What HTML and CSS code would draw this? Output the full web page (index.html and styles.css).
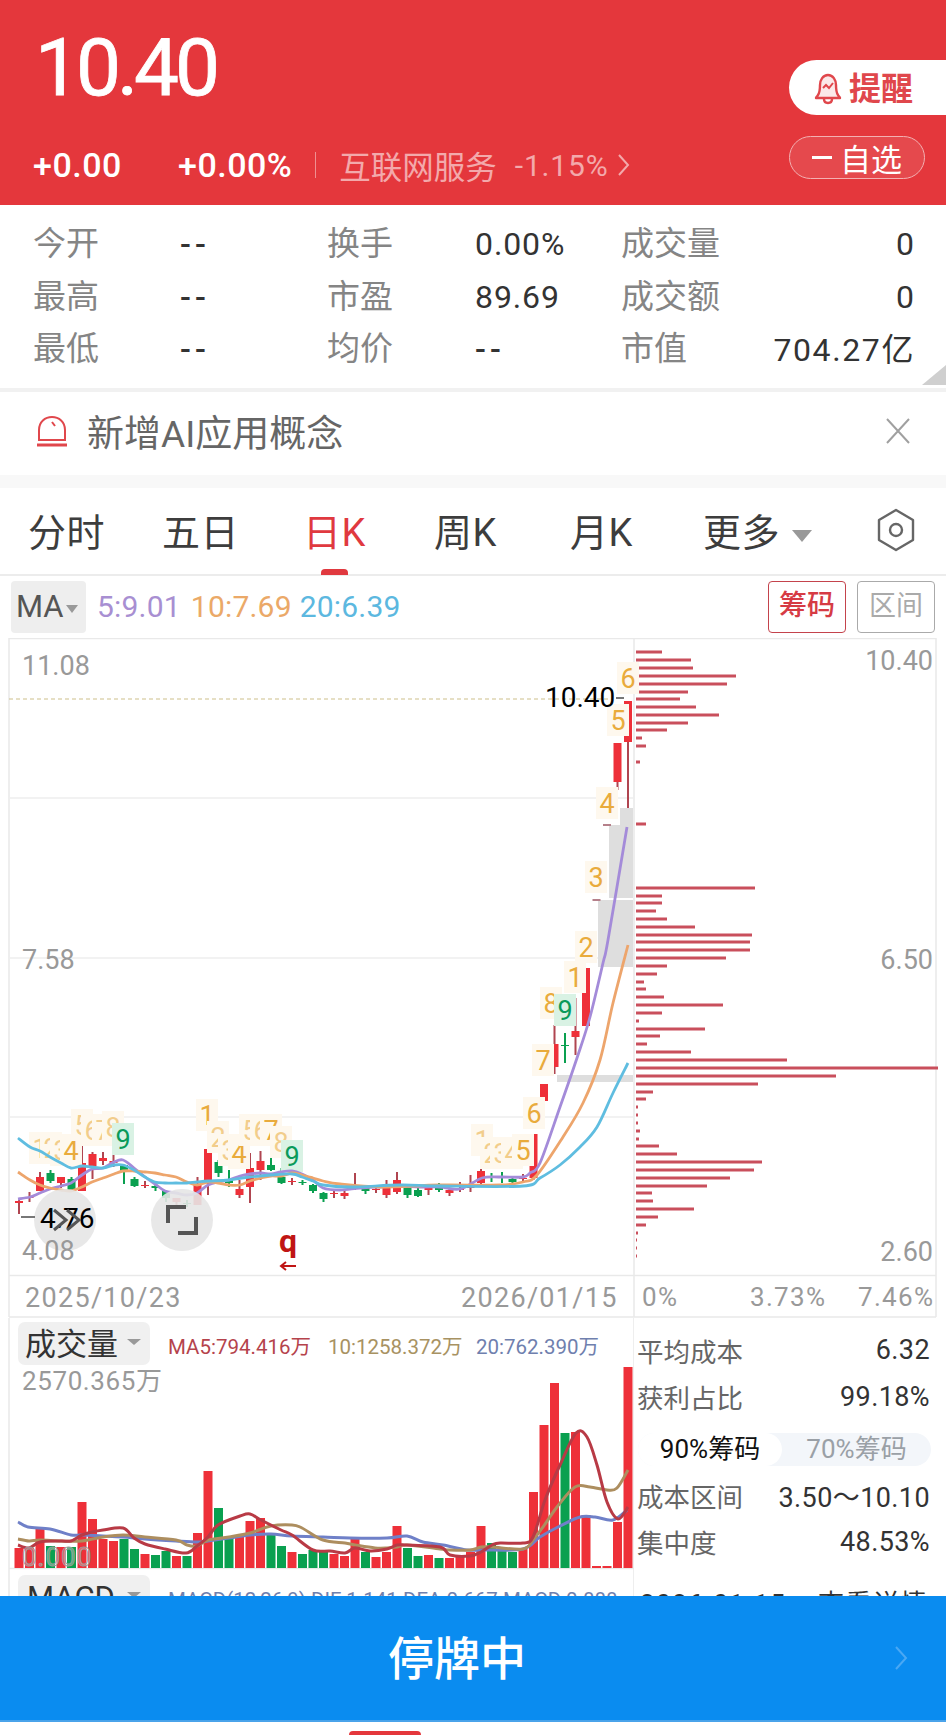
FILE: index.html
```html
<!DOCTYPE html>
<html lang="zh-CN">
<head>
    <meta charset="UTF-8">
    <title>行情</title>
    <link rel="stylesheet" href="styles.css">
</head>
<body>

    <header class="quote">
        <div class="quote-main">
            <div class="price">10.40</div>
            <div class="change-row">
                <span class="change change-abs">+0.00</span>
                <span class="change change-pct">+0.00%</span>
                <span class="sep"></span>
                <span class="sector">互联网服务</span>
                <span class="sector-pct">-1.15%</span>
                <svg class="sector-arrow" width="14" height="24" viewBox="0 0 14 24"><path d="M2 2l9 10-9 10" fill="none" stroke="#f3a9ab" stroke-width="2"/></svg>
            </div>
        </div>
        <div class="quote-btns">
            <div class="remind-btn">
                <svg width="30" height="34" viewBox="0 0 30 34"><path d="M5 24c2-3 2-6 2-10 0-5 3-10 8-10s8 5 8 10c0 4 0 7 2 10 1 2 2 2 2 3H3c0-1 1-1 2-3z" fill="#fbe9e9" stroke="#e0474c" stroke-width="2.4" stroke-linejoin="round"/><path d="M11 28c0 3 2 4 4 4s4-1 4-4" fill="none" stroke="#e0474c" stroke-width="2.4"/><path d="M10 17l3-3 3 3 4-5" fill="none" stroke="#e0474c" stroke-width="2"/></svg>
                <span>提醒</span>
            </div>
            <div class="watch-btn"><i></i><span>自选</span></div>
        </div>
    </header>

    <section class="stats">
        <span class="lbl">今开</span><span class="val none">--</span>
        <span class="lbl">换手</span><span class="val">0.00%</span>
        <span class="lbl">成交量</span><span class="val right">0</span>
        <span class="lbl">最高</span><span class="val none">--</span>
        <span class="lbl">市盈</span><span class="val">89.69</span>
        <span class="lbl">成交额</span><span class="val right">0</span>
        <span class="lbl">最低</span><span class="val none">--</span>
        <span class="lbl">均价</span><span class="val none">--</span>
        <span class="lbl">市值</span><span class="val right wide">704.27亿</span>
        <i class="corner"></i>
    </section>

    <section class="notice">
        <svg width="32" height="32" viewBox="0 0 32 32"><path d="M3 25V15C3 7 9 2 16 2s13 5 13 13v10z" fill="#fff" stroke="#e0474c" stroke-width="2"/><path d="M16 7l3 4" stroke="#e0474c" stroke-width="2"/><path d="M1 30h30" stroke="#e0474c" stroke-width="3"/></svg>
        <span class="notice-text">新增AI应用概念</span>
        <svg class="notice-close" width="24" height="26" viewBox="0 0 24 26"><path d="M1 1l22 24M23 1L1 25" stroke="#a0a0a0" stroke-width="2" fill="none"/></svg>
    </section>
    <div class="gap"></div>

    <nav class="tabs">
        <span class="tab t1">分时</span>
        <span class="tab t2">五日</span>
        <span class="tab t3 on">日K</span>
        <span class="tab t4">周K</span>
        <span class="tab t5">月K</span>
        <span class="tab t6">更多<b class="caret big"></b></span>
        <svg class="hex" width="40" height="44" viewBox="0 0 40 44"><path d="M20 2l17 10v20L20 42 3 32V12z" fill="none" stroke="#666" stroke-width="2.400" stroke-linejoin="round"/><circle cx="20" cy="22" r="6" fill="none" stroke="#666" stroke-width="2.400"/></svg>
    </nav>

    <div class="ma-bar">
        <span class="ma-chip">MA<b class="caret"></b></span>
        <span class="ma5">5:9.01</span>
        <span class="ma10">10:7.69</span>
        <span class="ma20">20:6.39</span>
        <span class="mode-btn on">筹码</span>
        <span class="mode-btn">区间</span>
    </div>

    <svg id="kline" class="kline" width="946" height="680" viewBox="0 638 946 680">
        <path class="frame" d="M9 638V1317M634 638V1317M936 638V1317M9 638.500H936M9 1275.500H936M9 1317H936"/>
        <path class="grid" d="M9 798H634M9 958H634M9 1117H634"/>
        <path class="last-line" d="M9 699H612"/>
        <g id="gaps" class="gapbox">
            <rect x="620" y="808" width="13" height="17"/>
            <rect x="609" y="825" width="24" height="73"/>
            <rect x="598" y="900" width="35" height="67"/>
            <rect x="557" y="1075" width="76" height="7"/>
        </g>
        <g id="candles"></g>
        <g id="chips"></g>
        <g id="nines"></g>
        <path id="ma5line" class="mline m-purple"/>
        <path id="ma10line" class="mline m-orange"/>
        <path id="ma20line" class="mline m-blue"/>
        <circle class="round-btn" cx="65" cy="1220" r="31"/>
        <circle class="round-btn" cx="182" cy="1220" r="31"/>

        <text class="axis" x="22" y="675">11.08</text>
        <text class="axis" x="22" y="969">7.58</text>
        <text class="axis" x="22" y="1260">4.08</text>
        <text class="axis end" x="933" y="670">10.40</text>
        <text class="axis end" x="933" y="969">6.50</text>
        <text class="axis end" x="933" y="1261">2.60</text>
        <text class="marker" x="545" y="707">10.40</text>
        <path class="dash" d="M616 698h8"/>

        <path class="dash" d="M21 1217h14"/>
        <text class="marker" x="40" y="1228">4.76</text>
        <path class="btn-icon thin" d="M54 1210l12 10-12 10M67 1210l12 10-12 10"/>
        <path class="btn-icon" d="M168 1223v-16h18M196 1217v16h-18"/>
        <text class="qmark" x="279" y="1252">q</text>
        <path class="qarrow" d="M296 1266h-15m5-4l-5 4 5 4"/>

        <text class="date" x="25" y="1307">2025/10/23</text>
        <text class="date" x="461" y="1307">2026/01/15</text>
        <text class="date pct" x="642" y="1306">0%</text>
        <text class="date pct" x="750" y="1306">3.73%</text>
        <text class="date pct" x="858" y="1306">7.46%</text>
    </svg>

    <section class="lower">
        <svg id="volume" class="vol" width="634" height="278" viewBox="0 1318 634 278">
            <path class="frame" d="M9 1318V1596M634 1318V1596M9 1568.500H634"/>
            <g id="volbars"></g>
            <path id="vol20" class="vline v-blue"/>
            <path id="vol10" class="vline v-tan"/>
            <path id="vol5" class="vline v-red"/>
            <rect class="chip-bg" x="18" y="1322" width="132" height="43" rx="7"/>
            <text class="chip-text" x="25" y="1355">成交量</text>
            <path class="chip-caret" d="M127 1339h14l-7 6z"/>
            <text class="leg leg-r" x="168" y="1354">MA5:794.416万</text>
            <text class="leg leg-t" x="328" y="1354">10:1258.372万</text>
            <text class="leg leg-b" x="476" y="1354">20:762.390万</text>
            <text class="vol-max" x="22" y="1390">2570.365万</text>
            <text class="vol-zero" x="22" y="1566">0.000</text>
            <rect class="chip-bg" x="18" y="1575" width="132" height="43" rx="7"/>
            <text class="chip-text" x="27" y="1608">MACD</text>
            <path class="chip-caret" d="M127 1592h14l-7 6z"/>
            <text class="leg macd" x="168" y="1607">MACD(12,26,9) DIF:1.141 DEA:0.667 MACD:0.888</text>
        </svg>

        <aside class="cost">
            <div class="cost-row"><span>平均成本</span><b>6.32</b></div>
            <div class="cost-row"><span>获利占比</span><b>99.18%</b></div>
            <div class="pill"><span class="pill-on">90%筹码</span><span class="pill-off">70%筹码</span></div>
            <div class="cost-row"><span>成本区间</span><b>3.50～10.10</b></div>
            <div class="cost-row"><span>集中度</span><b>48.53%</b></div>
            <div class="cost-date"><span>2026-01-15</span><span>查看详情</span></div>
        </aside>
    </section>

    <div class="halt">
        <span>停牌中</span>
        <svg class="halt-arrow" width="14" height="24" viewBox="0 0 14 24"><path d="M2 1l10 11L2 23" fill="none" stroke="#4aa8f4" stroke-width="2"/></svg>
    </div>
    <div class="foot"><i></i></div>

    <script src="chart.js"></script>
</body>
</html>
```

FILE: styles.css
```css
* {
    box-sizing: border-box;
}

body {
    font-family: Roboto, 'Noto Sans CJK SC', sans-serif;
    background-color: #fff;
    color: #333;
    width: 946px;
    height: 1735px;
    margin: 0;
    overflow: hidden;
}

/* top quote block */
.quote {
    height: 205px;
    background-color: #e4373c;
    color: #fff;
    display: flex;
    justify-content: space-between;
}

.quote-main {
    padding-left: 33px;
}

.price {
    font-size: 80px;
    font-weight: 400;
    -webkit-text-stroke: 0.8px #fff;
    line-height: 80px;
    letter-spacing: -4px;
    margin-top: 28px;
    margin-left: 2px;
}

.change-row {
    display: flex;
    align-items: center;
    height: 34px;
    margin-top: 40px;
    font-size: 34px;
}

.change {
    font-weight: 500;
    letter-spacing: 0.500px;
}

.change-abs {
    width: 145px;
}

.sep {
    width: 1px;
    height: 26px;
    background-color: #ef8f91;
    margin: 0 23px;
}

.sector {
    font-size: 31.500px;
    color: #f3a9ab;
}

.sector-pct {
    color: #f3a9ab;
    font-size: 30px;
    margin-left: 18px;
    margin-right: 9px;
    letter-spacing: 0.800px;
}

.quote-btns {
    width: 157px;
    padding-top: 60px;
    display: flex;
    flex-direction: column;
    gap: 21px;
}

.remind-btn {
    height: 55px;
    background-color: #fff;
    border-radius: 28px 0 0 28px;
    display: flex;
    align-items: center;
    gap: 6px;
    padding-left: 24px;
    color: #e0474c;
    font-size: 32px;
    font-weight: 700;
}

.remind-btn span {
    margin-bottom: 4px;
}

.watch-btn {
    width: 136px;
    height: 43px;
    border: 1.500px solid #f3b0b2;
    border-radius: 22px;
    background-color: #e5494d;
    display: flex;
    align-items: center;
    padding-left: 22px;
    font-size: 31px;
    gap: 8px;
}

.watch-btn i {
    width: 20px;
    height: 3px;
    background-color: #fff;
}

/* stats table */
.stats {
    height: 183px;
    padding-top: 10px;
    padding-left: 33px;
    padding-right: 31px;
    display: grid;
    grid-template-columns: 147px 147px 148px 146px 140px 154px;
    grid-auto-rows: 52.500px;
    align-items: center;
    position: relative;
}

.lbl {
    font-size: 33px;
    color: #858585;
}

.val {
    font-size: 32px;
    color: #333;
    white-space: nowrap;
    letter-spacing: 0.900px;
    margin-top: 6px;
}

.val.none {
    letter-spacing: 4px;
    font-weight: 500;
}

.val.right {
    text-align: right;
}

.val.wide {
    letter-spacing: 1.600px;
    margin-top: 1px;
}

.corner {
    position: absolute;
    right: 0;
    bottom: 3px;
    border-left: 24px solid transparent;
    border-bottom: 20px solid #cfcfcf;
}

.notice {
    height: 87px;
    border-top: 4px solid #f1f1f1;
    padding: 0 36px 5px 36px;
    display: flex;
    align-items: center;
    gap: 19px;
}

.notice-text {
    font-size: 37px;
    color: #666;
    flex: 1;
}

.gap {
    height: 13px;
    background-color: #f8f8f8;
}

/* period tabs */
.tabs {
    height: 88px;
    border-bottom: 2px solid #ececec;
    position: relative;
    display: grid;
    grid-template-columns: 134px 141px 131px 136px 133px 173px 1fr;
    padding: 0 0 3px 28px;
    align-items: center;
    font-size: 38px;
    color: #3d3d3d;
}

.tab {
    white-space: nowrap;
    letter-spacing: 0.400px;
}

.tab.on {
    color: #e0393f;
}

.tab.on::after {
    content: '';
    position: absolute;
    left: 321px;
    bottom: -1px;
    width: 27px;
    height: 6px;
    border-radius: 4px 4px 0 0;
    background-color: #e0393f;
}

.caret {
    display: inline-block;
    width: 0;
    height: 0;
    border-left: 7px solid transparent;
    border-right: 7px solid transparent;
    border-top: 9px solid #999;
    margin-left: 3px;
    vertical-align: middle;
}

.caret.big {
    border-left-width: 10px;
    border-right-width: 10px;
    border-top-width: 12px;
    margin-left: 12px;
}

/* indicator bar */
.ma-bar {
    height: 62px;
    padding: 5px 11px 0 11px;
    display: flex;
    align-items: flex-start;
    font-size: 30px;
    border-bottom: 0;
}

.ma-chip {
    width: 75px;
    height: 52px;
    background-color: #eee;
    border-radius: 4px;
    color: #555;
    padding-left: 5px;
    font-size: 31px;
    line-height: 52px;
    margin-right: 11px;
    white-space: nowrap;
}

.ma-chip .caret {
    margin-left: 2px;
    border-left-width: 6px;
    border-right-width: 6px;
    border-top-width: 8px;
}

.ma5, .ma10, .ma20 {
    line-height: 52px;
    margin-right: 10px;
    letter-spacing: 0.200px;
}

.ma5 { color: #a88fd2; }
.ma10 { color: #eba968; margin-right: 8px; }
.ma20 { color: #5cb8e0; margin-right: auto; }

.mode-btn {
    width: 78px;
    height: 52px;
    border: 1.500px solid #aaa;
    border-radius: 4px;
    color: #aaa;
    text-align: center;
    line-height: 48px;
    font-size: 27px;
    margin-left: 11px;
}

.mode-btn.on {
    border-color: #c4434c;
    color: #d63b44;
    font-size: 28px;
    font-weight: 500;
}

/* charts */
.kline, .vol {
    display: block;
}

.frame {
    fill: none;
    stroke: #e9e9e9;
    stroke-width: 1.500;
}

.grid {
    fill: none;
    stroke: #eeeeee;
    stroke-width: 1.500;
}

.last-line {
    fill: none;
    stroke: #cdbf8a;
    stroke-width: 1;
    stroke-dasharray: 4 3;
}

.gapbox rect {
    fill: #dedede;
}

.mline {
    fill: none;
    stroke-width: 2.800;
    stroke-linejoin: round;
}

.m-purple { stroke: #a48bd9; }
.m-orange { stroke: #eda56c; }
.m-blue { stroke: #5fbde0; }

.axis {
    font-size: 27px;
    fill: #999;
}

.axis.end {
    text-anchor: end;
}

.marker {
    font-size: 28px;
    fill: #000;
}

.dash {
    fill: none;
    stroke: #777;
    stroke-width: 2;
}

.round-btn {
    fill: #e6e6e6;
    opacity: 0.9;
}

.btn-icon {
    fill: none;
    stroke: #555;
    stroke-width: 4;
}

.btn-icon.thin {
    stroke-width: 3;
}

.qmark {
    font-size: 32px;
    font-weight: 700;
    fill: #c01515;
}

.qarrow {
    fill: none;
    stroke: #c01515;
    stroke-width: 2;
}

.date {
    font-size: 27px;
    fill: #999;
    letter-spacing: 1.300px;
}

.date.pct {
    font-size: 26px;
}

.nine-bg { fill: #fef8ee; }
.nine-bg.green { fill: #d9f2e4; }

.nine {
    font-size: 27px;
    text-anchor: middle;
    fill: #e9ab3c;
}

.nine.green {
    fill: #0a9a5a;
}

.chip-bg { fill: #f0f0f0; }

.chip-text {
    font-size: 31px;
    fill: #333;
}

.chip-caret { fill: #999; }

.leg {
    font-size: 20.500px;
}

.leg-r { fill: #b5434c; }
.leg-t { fill: #a89262; }
.leg-b { fill: #6f80ae; }

.macd { fill: #6f80ae; }

.vol-max {
    font-size: 26px;
    fill: #999;
    letter-spacing: 0.600px;
}

.vol-zero {
    font-size: 26px;
    fill: #fff;
    fill-opacity: 0.3;
    stroke: #9a9a9a;
    stroke-width: 1;
    letter-spacing: 1px;
}

.vline {
    fill: none;
    stroke-width: 3;
    stroke-linejoin: round;
}

.v-blue { stroke: #6f80c8; }
.v-tan { stroke: #ad8e5f; }
.v-red { stroke: #b83a45; }

/* cost panel */
.lower {
    display: flex;
    height: 278px;
    overflow: hidden;
}

.cost {
    width: 312px;
    padding: 9px 16px 0 3px;
}

.cost-row {
    display: flex;
    justify-content: space-between;
    align-items: center;
    height: 46.500px;
    font-size: 26.500px;
    color: #666;
    white-space: nowrap;
}

.cost-row b {
    font-weight: 400;
    font-size: 27px;
    color: #333;
    letter-spacing: 0.400px;
}

.pill {
    display: flex;
    height: 33px;
    margin: 13px -1px 6px 1px;
    background-color: #f3f6fa;
    border-radius: 17px;
    font-size: 26px;
    line-height: 33px;
    color: #9aa0a6;
    text-align: center;
    white-space: nowrap;
}

.pill-on {
    width: 144px;
    background-color: #fff;
    border-radius: 17px;
    color: #111;
}

.pill-off {
    flex: 1;
}

.cost-date {
    display: flex;
    justify-content: space-between;
    margin-top: 23px;
    font-size: 26px;
    line-height: 32px;
    color: #333;
    letter-spacing: 1.500px;
    padding: 0 2px 0 3px;
}

.halt {
    height: 126px;
    background-color: #0a8cf0;
    border-bottom: 2px solid #4aa3ea;
    color: #fff;
    font-size: 46px;
    font-weight: 500;
    display: flex;
    align-items: center;
    justify-content: center;
    padding: 0 32px 6px 0;
    position: relative;
}

.halt-arrow {
    position: absolute;
    right: 38px;
    top: 50px;
}

.foot {
    height: 13px;
    display: flex;
    justify-content: center;
    align-items: flex-end;
    padding-right: 177px;
}

.foot i {
    width: 72px;
    height: 4px;
    background-color: #e4373c;
    border-radius: 12px 12px 0 0;
}
```

FILE: chart.js
```js
var NS = 'http://www.w3.org/2000/svg';
var RED = '#ee3039', GREEN = '#0aa050';

function el(parent, name, attrs, text) {
    var n = document.createElementNS(NS, name);
    for (var k in attrs) n.setAttribute(k, attrs[k]);
    if (text) n.textContent = text;
    document.getElementById(parent).appendChild(n);
}

function xOf(i) {
    return 19 + 10.5 * i;
}

// "x,y x,y ..." to a smoothed path
function smooth(str) {
    var p = str.split(' ').map(function (s) { return s.split(',').map(Number); });
    var d = 'M' + p[0][0] + ' ' + p[0][1];
    for (var i = 0; i < p.length - 1; i++) {
        var a = p[Math.max(i - 1, 0)], b = p[i], c = p[i + 1], e = p[Math.min(i + 2, p.length - 1)];
        d += 'C' + (b[0] + (c[0] - a[0]) / 6).toFixed(1) + ' ' + (b[1] + (c[1] - a[1]) / 6).toFixed(1) + ' ' +
            (c[0] - (e[0] - b[0]) / 6).toFixed(1) + ' ' + (c[1] - (e[1] - b[1]) / 6).toFixed(1) + ' ' + c[0] + ' ' + c[1];
    }
    return d;
}

// body top, body bottom, wick top, wick bottom, colour
var candles = [
    [1201,1203,1200,1214,'r'],[1197,1198,1192,1202,'r'],[1177,1191,1172,1191,'r'],[1173,1181,1170,1183,'g'],
    [1177,1183,1177,1188,'r'],[1179,1190,1177,1190,'g'],[1163,1191,1144,1191,'r'],[1154,1166,1152,1179,'r'],
    [1158,1161,1152,1165,'r'],[1161,1163,1149,1167,'r'],[1165,1171,1165,1184,'g'],[1179,1186,1177,1187,'g'],
    [1185,1186,1181,1188,'r'],[1186,1188,1183,1191,'g'],[1191,1198,1191,1202,'g'],[1198,1202,1198,1206,'r'],
    [1203,1204,1200,1207,'g'],[1185,1205,1177,1205,'r'],[1149,1180,1137,1195,'r'],[1162,1173,1160,1177,'g'],
    [1180,1183,1170,1187,'g'],[1189,1195,1180,1198,'r'],[1168,1187,1153,1203,'r'],[1161,1170,1151,1180,'r'],
    [1165,1170,1153,1171,'g'],[1177,1183,1168,1184,'g'],[1181,1182,1178,1185,'r'],[1182,1183,1180,1185,'g'],
    [1185,1191,1184,1193,'g'],[1193,1199,1192,1202,'g'],[1193,1194,1190,1198,'r'],[1193,1196,1190,1199,'r'],
    [1187,1188,1173,1190,'r'],[1188,1191,1186,1194,'g'],[1189,1190,1185,1193,'r'],[1187,1195,1180,1198,'r'],
    [1180,1192,1172,1194,'r'],[1188,1195,1186,1198,'g'],[1190,1196,1187,1197,'g'],[1188,1190,1186,1195,'r'],
    [1188,1190,1183,1192,'g'],[1190,1193,1188,1196,'r'],[1189,1190,1182,1192,'r'],[1186,1188,1175,1192,'r'],
    [1171,1183,1162,1187,'r'],[1176,1177,1173,1182,'g'],[1177,1178,1172,1183,'g'],[1179,1182,1177,1183,'g'],
    [1178,1179,1174,1183,'r'],[1134,1178,1134,1180,'r'],[1084,1101,1084,1118,'r'],[1044,1067,1025,1074,'r'],
    [1045,1046,1033,1063,'g'],[1031,1037,998,1055,'r'],[968,1026,968,1026,'r'],[899,901,899,901,'d'],
    [824,826,824,826,'d'],[743,782,743,790,'r'],[701,742,701,808,'r']
];

candles.forEach(function (c, i) {
    var x = xOf(i);
    var body = c[4] == 'r' ? RED : c[4] == 'g' ? GREEN : '#b5808a';
    var wick = c[4] == 'g' ? GREEN : '#b04550';
    el('candles', 'rect', { x: x - 1, y: c[2], width: 2, height: c[3] - c[2], fill: wick });
    el('candles', 'rect', { x: x - 4, y: c[0], width: 8, height: c[1] - c[0], fill: body });
});

// chip distribution, [y, length]
var chips = [
    [652,26],[660,55],[668,57],[676,100],[684,91],[692,52],[699,44],[707,60],[715,83],[723,52],[730,31],[738,6],[746,10],
    [762,4],[824,10],[888,119],[896,26],[903,26],[911,20],[919,31],[927,59],[935,116],[942,114],[950,114],[958,90],
    [966,31],[974,21],[982,8],[989,10],[997,28],[1005,87],[1013,26],[1021,3],[1029,69],[1036,24],[1044,11],[1052,55],
    [1060,151],[1068,302],[1076,200],[1084,122],[1092,17],[1099,10],[1107,2],[1115,2],[1123,2],[1131,4],[1139,3],
    [1146,23],[1154,41],[1162,126],[1170,118],[1178,94],[1186,71],[1193,16],[1201,17],[1209,58],[1217,22],[1225,10],
    [1233,2],[1240,1],[1248,1],[1256,1]
];

chips.forEach(function (c) {
    el('chips', 'rect', { x: 636, y: c[0] - 1.5, width: c[1], height: 3, fill: '#c94f5c' });
});

// magic nine labels: x, y, digit, style (s solid, f faint, g green)
var nines = [
    [40,1148,'1','f'],[51,1148,'2','f'],[61,1150,'3','f'],[71,1150,'4','s'],[82,1125,'5','f'],[92,1130,'6','f'],
    [103,1130,'7','f'],[113,1127,'8','f'],[123,1139,'9','g'],
    [207,1115,'1','s'],[218,1137,'2','f'],[229,1150,'3','f'],[239,1153,'4','s'],[250,1130,'5','f'],[261,1130,'6','f'],
    [271,1130,'7','s'],[281,1142,'8','f'],[292,1156,'9','g'],
    [482,1140,'1','f'],[491,1153,'2','f'],[501,1153,'3','f'],[512,1153,'4','f'],[523,1150,'5','s'],[534,1113,'6','s'],
    [543,1060,'7','s'],[551,1003,'8','s'],[565,1010,'9','g'],[575,977,'1','s'],[586,947,'2','s'],
    [596,877,'3','s'],[607,803,'4','s'],[618,720,'5','s'],[628,678,'6','s']
];

nines.forEach(function (n) {
    var green = n[3] == 'g';
    el('nines', 'rect', { x: n[0] - 11, y: n[1] - 16, width: 22, height: 32, 'class': green ? 'nine-bg green' : 'nine-bg' });
    el('nines', 'text', {
        x: n[0], y: n[1] + 10,
        'class': green ? 'nine green' : 'nine',
        opacity: n[3] == 'f' ? 0.55 : 1
    }, n[2]);
});

var lines = {
    ma5line: '18,1199 30,1197 40,1193 50,1189 61,1186 71,1183 82,1175 92,1169 103,1168 114,1162 123,1160 134,1168 145,1177 155,1184 165,1191 176,1193 187,1195 197,1193 208,1185 218,1182 229,1180 240,1176 250,1174 261,1173 271,1174 281,1172 292,1171 302,1174 313,1180 323,1188 340,1190 360,1188 380,1187 400,1186 420,1187 440,1187 460,1189 482,1178 500,1177 523,1177 530,1173 540,1163 560,1107 577,1058 590,1017 603,963 608,940 627,827',
    ma10line: '18,1172 30,1180 40,1185 50,1188 61,1190 71,1191 82,1187 92,1182 103,1178 114,1174 123,1171 134,1171 145,1172 155,1173 165,1175 176,1177 187,1182 197,1185 208,1182 218,1183 229,1185 240,1185 250,1181 261,1178 271,1176 281,1176 292,1173 302,1175 313,1178 323,1181 340,1184 380,1187 440,1185 500,1185 523,1182 537,1175 563,1137 583,1103 600,1060 613,1003 628,945',
    ma20line: '18,1138 30,1147 40,1151 50,1157 61,1163 71,1168 82,1166 92,1167 103,1168 114,1165 123,1165 134,1170 145,1177 155,1182 165,1183 176,1183 187,1183 197,1182 208,1181 229,1180 250,1177 271,1175 292,1174 302,1177 313,1181 323,1185 350,1187 400,1185 440,1186 523,1186 540,1178 560,1165 580,1147 597,1127 613,1093 628,1063',
    vol20: '18,1522 28,1527 50,1529 71,1535 82,1535 103,1536 123,1537 145,1539 176,1541 197,1542 208,1541 229,1538 250,1535 271,1534 292,1536 323,1537 350,1538 387,1538 407,1536 423,1542 443,1545 467,1550 483,1550 523,1549 540,1537 560,1526 580,1517 595,1517 613,1520 627,1510',
    vol10: '18,1539 29,1541 40,1540 61,1541 82,1541 103,1537 123,1535 145,1537 176,1540 187,1545 197,1546 208,1540 229,1537 250,1533 271,1526 292,1525 302,1528 323,1540 345,1543 355,1545 375,1548 387,1548 397,1547 407,1545 440,1549 450,1550 470,1550 481,1547 492,1547 523,1549 533,1540 543,1527 557,1507 575,1487 590,1487 607,1490 617,1488 628,1470',
    vol5: '18,1545 29,1548 40,1542 61,1541 71,1541 82,1535 92,1532 103,1530 123,1528 134,1538 145,1544 165,1549 186,1553 197,1546 208,1537 218,1525 240,1516 250,1514 261,1520 281,1530 292,1535 313,1550 330,1551 345,1553 355,1548 370,1551 387,1549 397,1545 407,1545 440,1547 450,1555 470,1556 481,1552 492,1545 500,1543 523,1543 533,1537 545,1500 560,1465 576,1433 587,1437 597,1465 607,1502 618,1519 628,1507'
};

for (var id in lines) {
    document.getElementById(id).setAttribute('d', smooth(lines[id]));
}

// volume bars: top y, colour
var vols = [
    [1548,'r'],[1548,'r'],[1528,'r'],[1546,'g'],[1547,'r'],[1547,'g'],[1502,'r'],[1519,'r'],[1539,'r'],[1541,'r'],
    [1539,'g'],[1549,'g'],[1554,'r'],[1555,'g'],[1551,'g'],[1556,'r'],[1556,'g'],[1533,'r'],[1471,'r'],[1508,'g'],
    [1539,'g'],[1536,'r'],[1521,'r'],[1518,'r'],[1535,'g'],[1546,'g'],[1552,'r'],[1554,'g'],[1550,'g'],[1552,'g'],
    [1554,'r'],[1556,'r'],[1539,'r'],[1552,'g'],[1557,'r'],[1552,'r'],[1526,'r'],[1548,'g'],[1556,'g'],[1555,'r'],
    [1558,'g'],[1558,'r'],[1555,'r'],[1552,'r'],[1526,'r'],[1543,'g'],[1550,'g'],[1552,'g'],[1549,'r'],[1492,'r'],
    [1425,'r'],[1383,'r'],[1433,'g'],[1432,'r'],[1515,'r'],[1566,'r'],[1566,'r'],[1522,'r'],[1367,'r']
];

vols.forEach(function (v, i) {
    el('volbars', 'rect', { x: xOf(i) - 4.5, y: v[0], width: 9, height: 1568 - v[0], fill: v[1] == 'r' ? RED : GREEN });
});
```
